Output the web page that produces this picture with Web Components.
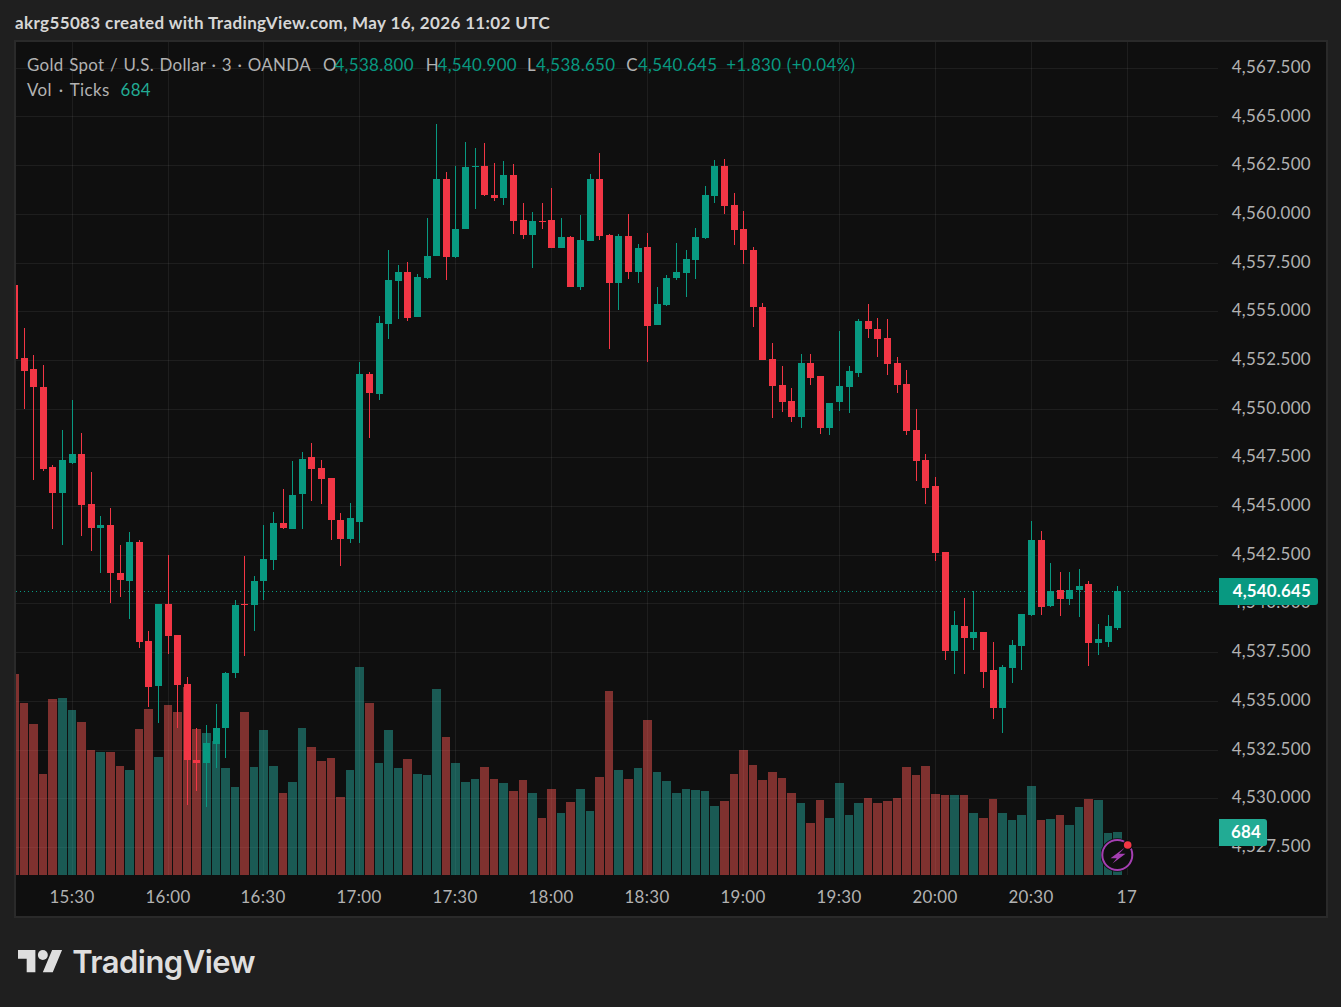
<!DOCTYPE html>
<html lang="en"><head><meta charset="utf-8"><title>Gold Spot chart</title>
<style>
html,body{margin:0;padding:0;background:#1f1f1f}
body{font-family:"Lato","Liberation Sans",sans-serif;width:1341px;height:1007px;overflow:hidden}
</style></head>
<body>
<tv-app>
  <tv-header>akrg55083 created with TradingView.com, May 16, 2026 11:02 UTC</tv-header>
  <tv-chart>
    <tv-legend></tv-legend>
    <tv-pane></tv-pane>
    <tv-price-axis></tv-price-axis>
    <tv-time-axis></tv-time-axis>
  </tv-chart>
  <tv-footer></tv-footer>
</tv-app>
<script>
const NS='http://www.w3.org/2000/svg';
// x, high, bodyTop, bodyBottom, low, colour, volumeTop
const BARS=`14,285,285,359,359,r,674
24,328,358,371,409,r,703
33,355,369,387,480,r,724
43,365,387,469,471,r,774
52,465,467,493,529,r,699
62,430,460,493,545,g,698
72,400,454,463,464,g,710
81,433,454,505,536,r,722
91,472,504,528,551,r,750
100,516,525,528,573,g,752
110,508,525,573,603,r,752
120,545,573,580,597,r,766
129,532,542,581,619,g,770
139,540,542,642,648,r,729
148,631,641,687,707,r,709
158,604,604,686,723,g,757
168,555,604,636,654,r,705
177,635,635,685,728,r,712
187,677,684,760,805,r,687
196,728,760,763,791,r,729
206,725,743,763,807,g,733
216,704,728,744,768,g,741
225,672,673,728,758,g,768
235,600,605,673,678,g,787
244,556,604,605,656,r,712
254,576,581,605,631,g,767
263,525,559,581,600,g,730
273,512,523,560,570,g,766
283,489,523,528,529,r,793
292,461,495,529,529,g,782
302,452,459,494,529,g,728
311,443,457,469,501,r,747
321,460,468,479,504,r,761
331,478,478,520,540,r,758
340,513,520,539,566,r,797
350,503,518,539,543,g,770
359,362,374,522,543,g,667
369,372,374,393,438,r,703
379,316,323,394,400,g,763
388,250,280,324,339,g,730
398,265,272,281,319,g,768
407,262,272,318,321,r,759
417,274,277,317,317,g,774
427,218,256,278,279,g,775
436,124,179,256,256,g,689
446,172,179,257,280,r,737
455,166,229,257,258,g,763
465,142,167,229,229,g,782
475,148,166,167,209,g,779
484,143,166,195,196,r,767
494,163,195,198,201,r,779
503,161,175,198,205,g,783
513,164,175,221,234,r,791
523,203,220,235,239,r,780
532,212,221,235,268,g,793
542,203,221,222,229,r,818
551,188,220,248,248,r,789
561,218,237,248,248,g,813
570,236,237,287,287,r,802
580,215,240,287,290,g,789
590,174,179,241,241,g,811
599,153,179,236,240,r,777
609,234,235,283,349,r,691
618,234,236,283,310,g,770
628,214,236,272,279,r,779
638,244,248,272,283,g,768
647,233,247,326,362,r,720
657,287,304,325,325,g,772
666,275,278,305,306,g,781
676,243,272,278,280,g,793
686,250,259,273,297,g,789
695,228,237,260,279,g,790
705,186,195,238,239,g,791
714,160,166,196,203,g,806
724,159,166,206,214,r,801
734,193,205,230,245,r,774
743,211,229,250,264,r,750
753,247,250,307,327,r,765
762,303,307,360,360,r,780
772,343,359,386,418,r,772
782,366,385,402,412,r,778
791,388,401,417,422,r,793
801,354,363,417,428,g,803
810,354,363,378,385,r,823
820,376,376,428,434,r,800
829,403,403,428,435,g,818
839,331,386,402,411,g,783
849,366,371,387,413,g,815
858,319,321,373,377,g,803
868,304,321,329,338,r,798
877,318,329,339,357,r,803
887,319,338,364,375,r,801
897,357,363,385,393,r,798
906,370,384,431,435,r,767
916,409,430,461,481,r,775
925,454,460,488,504,r,766
935,477,486,553,561,r,794
945,552,552,651,660,r,795
954,611,625,651,674,g,795
964,598,626,638,674,r,795
973,591,632,638,650,g,813
983,632,632,672,688,r,818
993,642,670,708,719,r,799
1002,665,667,708,733,g,813
1012,640,645,668,683,g,820
1021,614,614,646,670,g,815
1031,521,540,615,616,g,786
1041,531,540,607,615,r,820
1050,563,591,606,607,g,819
1060,572,590,599,616,r,815
1069,572,590,599,605,g,825
1079,569,586,590,617,g,807
1088,581,584,643,666,r,799
1098,624,639,643,655,g,800
1108,615,626,642,647,g,833
1117,586,591,628,630,g,832`.split('\n').map(l=>{const p=l.split(',');return {x:+p[0],hi:+p[1],top:+p[2],bot:+p[3],lo:+p[4],c:p[5],v:+p[6]}});
const PRICES=['4,567.500','4,565.000','4,562.500','4,560.000','4,557.500','4,555.000','4,552.500','4,550.000','4,547.500','4,545.000','4,542.500','4,540.000','4,537.500','4,535.000','4,532.500','4,530.000','4,527.500'];
const TIMES=['15:30','16:00','16:30','17:00','17:30','18:00','18:30','19:00','19:30','20:00','20:30','17'];
const VX=[72,168,263,359,455,551,647,743,839,935,1031,1127];
const HY=[68,116,165,214,263,311,360,409,457,506,555,603,652,701,750,798,847];

function shadow(el,html){el.attachShadow({mode:'open'}).innerHTML=html;return el.shadowRoot}

customElements.define('tv-app',class extends HTMLElement{connectedCallback(){shadow(this,`<style>
:host{display:flex;flex-direction:column;width:1341px;height:1007px;color:#dbdbdb}
</style><slot></slot>`)}});

customElements.define('tv-header',class extends HTMLElement{connectedCallback(){shadow(this,`<style>
:host{display:flex;align-items:center;height:40px;box-sizing:border-box;padding:6px 0 0 15px;font:700 17px/20px "Lato","Liberation Sans",sans-serif;color:#d6d6d6;letter-spacing:.37px;white-space:nowrap}
</style><slot></slot>`)}});

customElements.define('tv-chart',class extends HTMLElement{connectedCallback(){shadow(this,`<style>
:host{display:grid;position:relative;grid-template-columns:1202px 108px;grid-template-rows:833px 41px;width:1310px;height:874px;margin-left:14px;border:2px solid #2a2a2a;background:#0f0f0f}
</style><slot></slot>`)}});

customElements.define('tv-legend',class extends HTMLElement{connectedCallback(){
 const ohlc=[['O','4,538.800',-2.3,12],['H','4,540.900',-1.5,10],['L','4,538.650',0,11],['C','4,540.645',0,9]];
 shadow(this,`<style>
:host{position:absolute;left:11px;top:11px;z-index:3;font:400 16.9px/24px "Lato","Liberation Sans",sans-serif;letter-spacing:.33px;word-spacing:.9px;color:#b2b2b2;white-space:nowrap;display:flex;flex-direction:column}
.row{display:flex;height:25px}
.first{margin-right:12px}
.v{color:#089981}
.t{color:#22ab94;margin-left:11px}
.vol{letter-spacing:.4px;word-spacing:2px}
</style>
<div class="row"><span class="first">Gold Spot / U.S. Dollar · 3 · OANDA</span>${ohlc.map(o=>`<span style="margin-right:${o[3]}px">${o[0]}<span class="v" style="margin-left:${o[2]}px">${o[1]}</span></span>`).join('')}<span class="v">+1.830 (+0.04%)</span></div>
<div class="row"><span class="vol">Vol · Ticks</span><span class="t">684</span></div>`)}});

customElements.define('tv-pane',class extends HTMLElement{connectedCallback(){
 const root=shadow(this,`<style>
:host{display:block;position:relative;width:1202px;height:833px;overflow:hidden}
svg{display:block}
.badge{position:absolute;left:1085px;top:796px;width:34px;height:34px}
</style>
<svg id="c" width="1202" height="833" viewBox="16 42 1202 833" shape-rendering="crispEdges"></svg>
<svg class="badge" viewBox="0 0 34 34">
 <circle cx="16.3" cy="17" r="16.8" fill="#0f0f0f"/>
 <circle cx="16.3" cy="17" r="15" fill="#0f0f0f" stroke="#a53fb2" stroke-width="2"/>
 <path d="M24 9.5 9.5 20.3h6.3l-4.3 5.2L24.5 15.8H18z" fill="#a53fb2"/>
 <circle cx="26.7" cy="7" r="5" fill="#0f0f0f"/>
 <circle cx="26.7" cy="7" r="3.8" fill="#f23645"/>
</svg>`);
 const s=root.getElementById('c');
 const add=(n,a)=>{const e=document.createElementNS(NS,n);for(const k in a)e.setAttribute(k,a[k]);s.appendChild(e);return e};
 const grid='rgba(242,242,242,.065)';
 HY.forEach(y=>add('rect',{x:16,y,width:1202,height:1,fill:grid}));
 VX.forEach(x=>add('rect',{x,y:42,width:1,height:833,fill:grid}));
 BARS.forEach((b,i)=>{
   const left=b.x-4, next=BARS[i+1]?BARS[i+1].x-4:left+10;
   add('rect',{x:left,y:b.v,width:next-left-1,height:875-b.v,fill:b.c==='g'?'rgba(38,166,154,.5)':'rgba(239,83,80,.5)'});
 });
 add('line',{x1:16,x2:1218,y1:591.5,y2:591.5,stroke:'#089981','stroke-width':1,'stroke-dasharray':'1 3'});
 BARS.forEach(b=>{
   const f=b.c==='g'?'#089981':'#f23645';
   add('rect',{x:b.x,y:b.hi,width:1,height:b.lo-b.hi,fill:f});
   add('rect',{x:b.x-3,y:b.top,width:7,height:Math.max(1,b.bot-b.top),fill:f});
 });
}});

customElements.define('tv-price-axis',class extends HTMLElement{connectedCallback(){
 shadow(this,`<style>
:host{display:flex;flex-direction:column;position:relative;grid-column:2;grid-row:1 / span 2;padding-top:.9px;font:400 16.9px/48.7px "Lato","Liberation Sans",sans-serif;letter-spacing:.33px;color:#b2b2b2}
.l{height:48.7px;text-align:right;padding-right:15px;flex:none}
.tag{position:absolute;left:1px;height:27px;line-height:26px;color:#fff;font-weight:700;text-align:right;padding-right:7px;box-sizing:border-box;border-radius:0 3px 3px 0;letter-spacing:.2px}
.p{top:536px;width:99px;background:#089981}
.v{top:777px;width:48px;background:#22ab94;padding-right:6px}
</style>${PRICES.map(p=>`<div class="l">${p}</div>`).join('')}
<div class="tag p">4,540.645</div><div class="tag v">684</div>`)}});

customElements.define('tv-time-axis',class extends HTMLElement{connectedCallback(){
 const steps=VX.map((x,i)=>i?x-VX[i-1]:0);
 shadow(this,`<style>
:host{display:flex;grid-column:1;grid-row:2;height:41px;box-sizing:border-box;padding:2px 0 0 16px;align-items:center;font:400 16.9px/39px "Lato","Liberation Sans",sans-serif;letter-spacing:.33px;color:#b2b2b2}
.t{flex:none;width:80px;text-align:center}
</style>${TIMES.map((t,i)=>`<div class="t" style="margin-left:${i?steps[i]-80:0}px">${t}</div>`).join('')}`)}});

customElements.define('tv-footer',class extends HTMLElement{connectedCallback(){
 shadow(this,`<style>
:host{display:flex;align-items:center;height:89px;padding:0 0 0 18px;color:#dedede}
svg{display:block;flex:none;margin-right:9.5px;margin-top:-1px}
span{font:600 31px/36px "Inter","Liberation Sans",sans-serif;letter-spacing:-.55px;margin-top:-1px}
</style>
<svg width="44.7" height="34.8" viewBox="0 0 36 28" fill="#dedede"><path d="M14 22H7V11H0V4h14v18zM28 22h-8l7.5-18h8L28 22z"/><circle cx="20" cy="8" r="4"/></svg>
<span>TradingView</span>`)}});
</script>
</body></html>
